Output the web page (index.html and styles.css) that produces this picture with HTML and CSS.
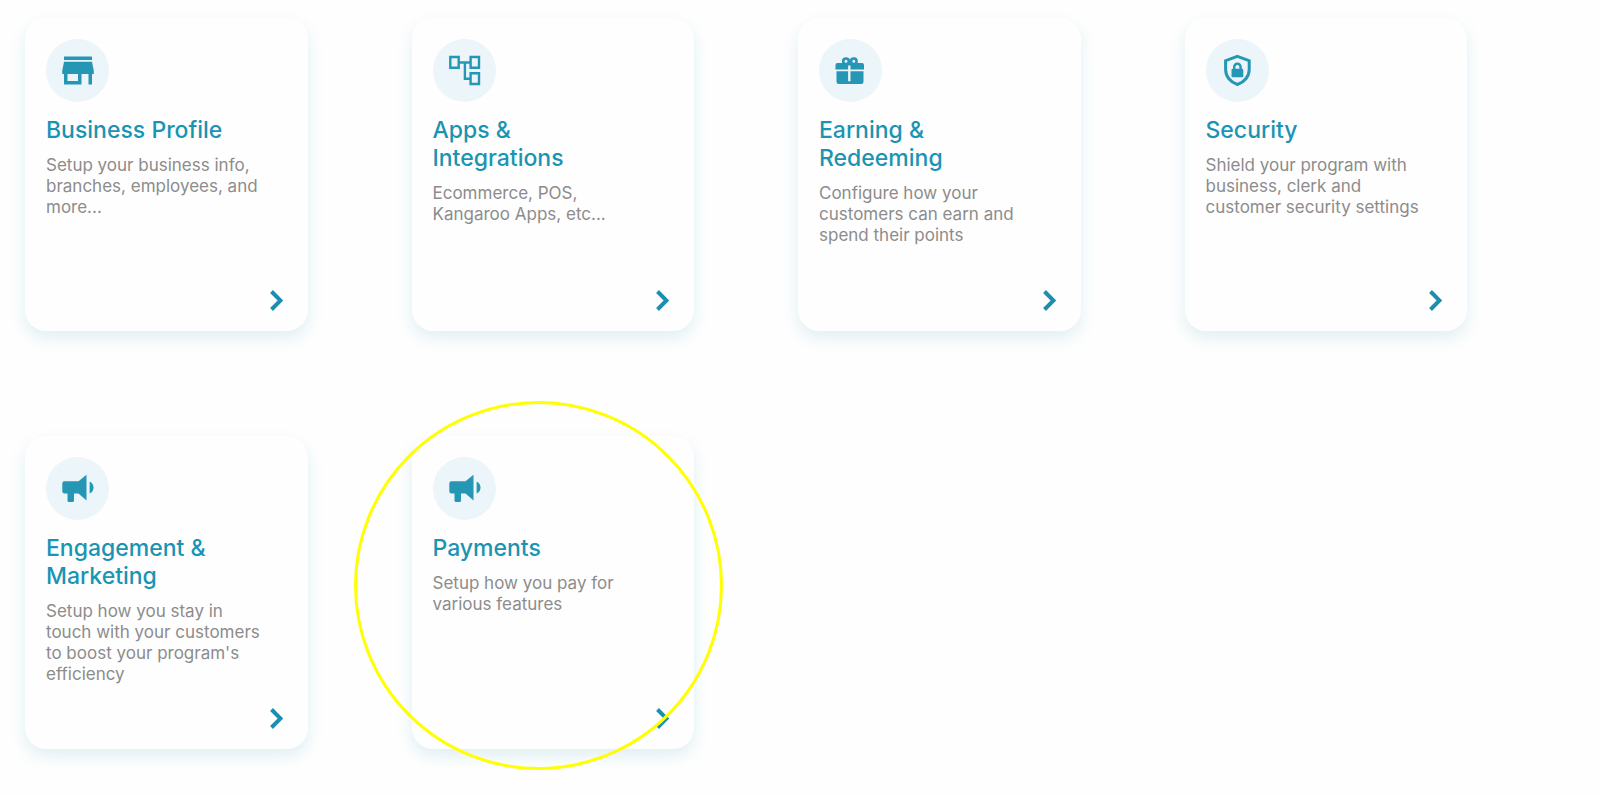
FILE: index.html
```html
<!DOCTYPE html>
<html lang="en">
<head>
    <meta charset="UTF-8">
    <meta name="viewport" content="width=device-width, initial-scale=1.0">
    <title>Settings</title>
    <link rel="stylesheet" href="styles.css">
</head>
<body>
    <main class="cards">
        <a class="card" href="#business">
            <svg class="icon" viewBox="0 0 63 63" aria-hidden="true">
                <path transform="translate(11 10.5) scale(1.75)" d="M20 4H4v2h16V4zm1 10v-2l-1-5H4l-1 5v2h1v6h10v-6h4v6h2v-6h1zm-9 4H6v-4h6v4z"/>
            </svg>
            <h2>Business Profile</h2>
            <p>Setup your business info, branches, employees, and more...</p>
            <svg class="arrow" viewBox="0 0 13 21" aria-hidden="true"><path d="M1.5 1.5l9 9-9 9"/></svg>
        </a>

        <a class="card" href="#apps">
            <svg class="icon" viewBox="0 0 63 63" aria-hidden="true">
                <g class="line">
                    <path d="M17.3 18h8.4v10.7h-8.4zM37.6 18H46v10.7h-8.4zM37.6 34.2H46V45h-8.4z"/>
                    <path d="M26 23.5h11.4M31.9 23.5v16.2h5.5"/>
                </g>
            </svg>
            <h2>Apps &amp; Integrations</h2>
            <p>Ecommerce, POS, Kangaroo Apps, etc...</p>
            <svg class="arrow" viewBox="0 0 13 21" aria-hidden="true"><path d="M1.5 1.5l9 9-9 9"/></svg>
        </a>

        <a class="card" href="#earning">
            <svg class="icon" viewBox="0 0 63 63" aria-hidden="true">
                <path d="M18.500 24h24.500q2 0 2 2v4.500h-13.500v-4h-2.400v4H16.500V26q0-2 2-2z"/>
                <path d="M17.500 32.200h11.600v10.100h2.400V32.200h13v10.300q0 2.500-2.500 2.500H20q-2.500 0-2.500-2.500z"/>
                <g class="loops"><circle cx="27" cy="22.300" r="2.800"/><circle cx="34.800" cy="22.300" r="2.800"/></g>
            </svg>
            <h2>Earning &amp; Redeeming</h2>
            <p>Configure how your customers can earn and spend their points</p>
            <svg class="arrow" viewBox="0 0 13 21" aria-hidden="true"><path d="M1.5 1.5l9 9-9 9"/></svg>
        </a>

        <a class="card" href="#security">
            <svg class="icon" viewBox="0 0 63 63" aria-hidden="true">
                <path class="shield" d="M31.400 17.300l11.800 4.400v8.800c0 7-4.800 12.800-11.800 15-7-2.200-11.800-8-11.800-15v-8.800z"/>
                <rect x="25.500" y="29.700" width="11.800" height="8.500" rx="1.200"/>
                <path class="line" d="M28.200 30.500v-2.600a3.200 3.200 0 0 1 6.400 0v2.600"/>
            </svg>
            <h2>Security</h2>
            <p>Shield your program with business, clerk and customer security settings</p>
            <svg class="arrow" viewBox="0 0 13 21" aria-hidden="true"><path d="M1.5 1.5l9 9-9 9"/></svg>
        </a>

        <a class="card" href="#marketing">
            <svg class="icon" viewBox="0 0 63 63" aria-hidden="true">
                <path d="M18.500 24.300h14l8-6.500v25.600l-8-6.900H28v7q0 1.500-1.500 1.500h-3.500q-1.500 0-1.500-1.500v-7h-3q-2.200 0-2.200-2.200v-7.800q0-2.200 2.200-2.200z"/>
                <path d="M43.600 24.700c5.200 1.500 5.200 10.200 0 11.700z"/>
            </svg>
            <h2>Engagement &amp; Marketing</h2>
            <p>Setup how you stay in touch with your customers to boost your program's efficiency</p>
            <svg class="arrow" viewBox="0 0 13 21" aria-hidden="true"><path d="M1.5 1.5l9 9-9 9"/></svg>
        </a>

        <a class="card marked" href="#payments">
            <svg class="icon" viewBox="0 0 63 63" aria-hidden="true">
                <path d="M18.500 24.300h14l8-6.500v25.600l-8-6.900H28v7q0 1.500-1.500 1.500h-3.500q-1.500 0-1.500-1.500v-7h-3q-2.200 0-2.200-2.200v-7.800q0-2.200 2.200-2.200z"/>
                <path d="M43.600 24.700c5.200 1.500 5.200 10.200 0 11.700z"/>
            </svg>
            <h2>Payments</h2>
            <p>Setup how you pay for various features</p>
            <svg class="arrow" viewBox="0 0 13 21" aria-hidden="true"><path d="M1.5 1.5l9 9-9 9"/></svg>
        </a>
    </main>
</body>
</html>
```

FILE: styles.css
```css
*, *::after{
    box-sizing: border-box;
}
body{
    margin: 0;
    background-color: #fefefe;
    font-family: Inter, "Open Sans", sans-serif;
}
.cards{
    display: grid;
    grid-template-columns: repeat(4, 1fr);
    gap: 105px 104px;
    padding: 18px 133px 40px 25px;
}
.card{
    position: relative;
    display: flex;
    flex-direction: column;
    min-height: 313px;
    padding: 21px 25px 20px 21px;
    border-radius: 21px;
    background-color: #fefefe;
    box-shadow: 0 7px 16px rgba(25, 140, 170, 0.13);
    color: #8c8c8c;
    text-decoration: none;
}
.icon{
    width: 63px;
    height: 63px;
    border-radius: 50%;
    background-color: #ebf5fa;
    fill: #2596b4;
}
.line, .loops, .shield{
    fill: none;
    stroke: #2596b4;
    stroke-width: 2.4;
}
.loops{
    stroke-width: 2.6;
}
.shield{
    stroke-width: 3;
}
h2{
    margin: 14px 0 11px;
    max-width: 210px;
    color: #1a94b3;
    font-size: 23px;
    font-weight: 500;
    line-height: 28px;
}
p{
    margin: 0;
    max-width: 220px;
    font-size: 17px;
    line-height: 21px;
}
.arrow{
    width: 13px;
    height: 21px;
    margin-top: auto;
    align-self: flex-end;
    fill: none;
    stroke: #1c8fb0;
    stroke-width: 4;
}
/* highlight ring round the card */
.marked::after{
    content: "";
    position: absolute;
    top: -35px;
    left: -58px;
    width: 369px;
    height: 369px;
    border: 3px solid #ff0;
    border-radius: 50%;
    pointer-events: none;
}
@media (max-width: 1300px){
    .cards{
        grid-template-columns: repeat(auto-fill, minmax(270px, 1fr));
        gap: 40px;
        padding-right: 25px;
    }
}
```
